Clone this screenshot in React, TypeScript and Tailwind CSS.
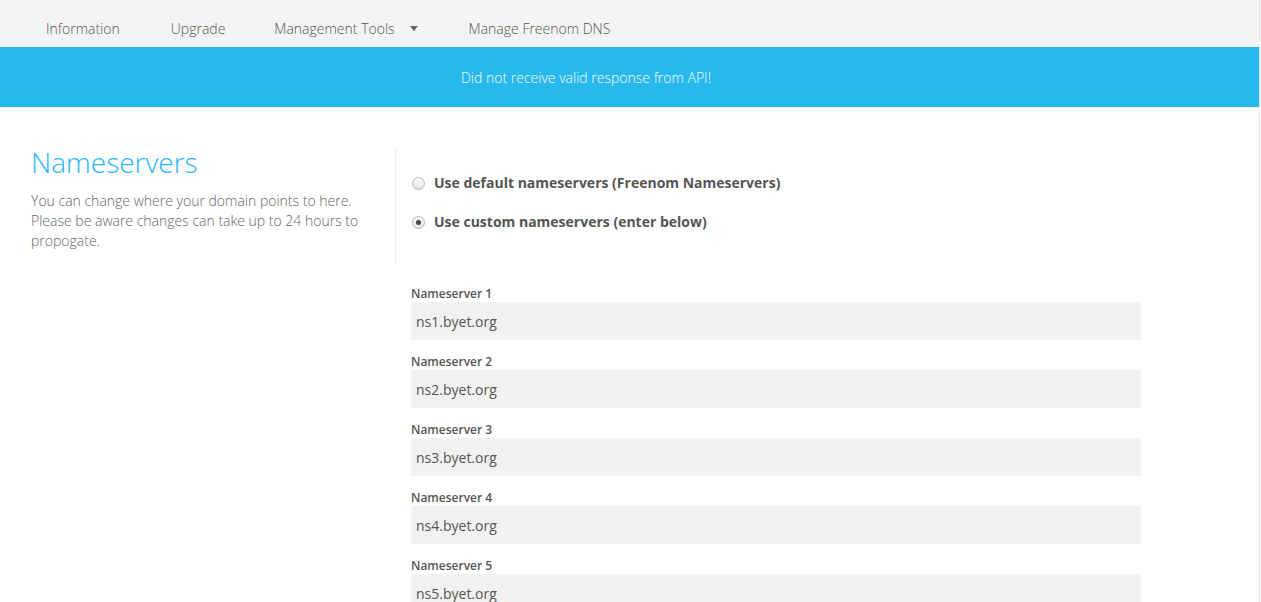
import { useState } from 'react';

const navItems = ['Information', 'Upgrade', 'Management Tools', 'Manage Freenom DNS'];

const nameservers = ['ns1.byet.org', 'ns2.byet.org', 'ns3.byet.org', 'ns4.byet.org', 'ns5.byet.org'];

function Radio({ checked }: { checked: boolean }) {
  return (
    <span className="mt-[4px] flex h-[13px] w-[13px] shrink-0 items-center justify-center rounded-full border border-[#b5b5b5] bg-gradient-to-b from-[#fcfcfc] to-[#e4e4e4]">
      {checked && <span className="h-[5px] w-[5px] rounded-full bg-[#444]" />}
    </span>
  );
}

export default function App() {
  const [mode, setMode] = useState<'default' | 'custom'>('custom');

  return (
    <div className="min-h-screen w-[1260px] border-r border-[#e5e5e5] bg-white font-['Open_Sans',sans-serif] text-[#555]">
      <nav className="flex h-[47px] items-center bg-[#f4f4f4] pl-[46px] pt-[9px] text-[14px] font-light text-[#555]">
        <a className="mr-[51px]">{navItems[0]}</a>
        <a className="mr-[49px]">{navItems[1]}</a>
        <a className="mr-[51px] flex items-center">
          {navItems[2]}
          <span className="ml-[15px] mt-[1px] h-0 w-0 border-x-[4px] border-t-[5px] border-x-transparent border-t-[#666]" />
        </a>
        <a>{navItems[3]}</a>
      </nav>

      <div className="flex h-[60px] items-center bg-[#27b8ee]">
        <p className="w-[1172px] text-center text-[14px] font-light text-white">
          Did not receive valid response from API!
        </p>
      </div>

      <main className="flex w-[1172px] pt-[40px]">
        <section className="w-[395px] shrink-0 pl-[31px] pr-[20px]">
          <h1 className="-mt-[2px] text-[28px] font-light leading-[34px] text-[#29b6f6]">Nameservers</h1>
          <p className="mt-[12px] text-[14px] font-light leading-[20px] text-[#666]">
            You can change where your domain points to here. Please be aware changes can take up to 24 hours to propogate.
          </p>
        </section>

        <section className="flex-1 pr-[31px]">
          <div className="border-l border-[#eee] pb-[34px] pl-[16px] pt-[26px]">
            <label className="flex cursor-pointer items-start gap-[9px]" onClick={() => setMode('default')}>
              <Radio checked={mode === 'default'} />
              <span className="text-[14px] font-bold leading-[20px] text-[#555]">
                Use default nameservers (Freenom Nameservers)
              </span>
            </label>
            <label className="mt-[19px] flex cursor-pointer items-start gap-[9px]" onClick={() => setMode('custom')}>
              <Radio checked={mode === 'custom'} />
              <span className="text-[14px] font-bold leading-[20px] text-[#555]">
                Use custom nameservers (enter below)
              </span>
            </label>
          </div>

          <div className="mt-[19px] flex flex-col gap-[13px] pl-[16px]">
            {nameservers.map((ns, i) => (
              <div key={ns}>
                <label className="block text-[12px] font-semibold leading-[17px] text-[#555]">
                  Nameserver {i + 1}
                </label>
                <input
                  defaultValue={ns}
                  className="block h-[38px] w-full bg-[#f2f2f2] px-[5px] text-[14px] text-[#555] outline-none"
                />
              </div>
            ))}
          </div>
        </section>
      </main>
    </div>
  );
}
